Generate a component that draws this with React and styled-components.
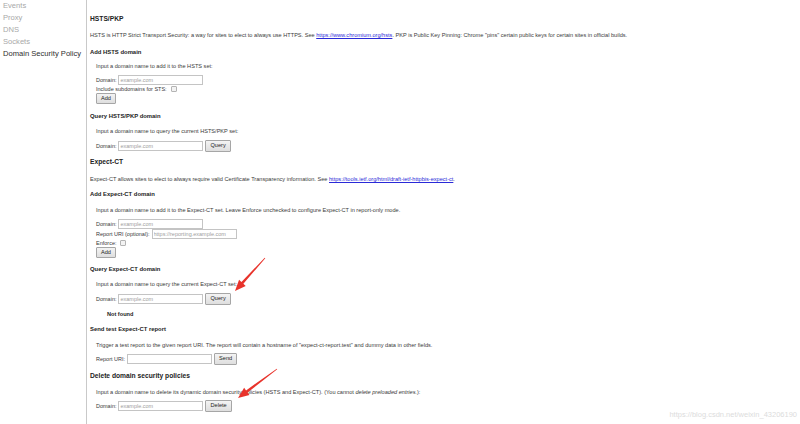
import React from "react";
import styled, { createGlobalStyle } from "styled-components";

const GlobalStyle = createGlobalStyle`
  html, body { margin: 0; padding: 0; background: #fff; }
  body { overflow: hidden; font-family: "Liberation Sans", Arial, sans-serif; }
  * { box-sizing: border-box; }
`;

const Page = styled.div`
  position: relative;
  display: flex;
  width: 800px;
  height: 424px;
  overflow: hidden;
`;

const Sidebar = styled.nav`
  width: 87px;
  flex: none;
  border-right: 1px solid #c9c9c9;
  padding: 0 0 0 3px;
  display: flex;
  flex-direction: column;
`;

const NavItem = styled.div`
  font-size: 7.6px;
  line-height: 12px;
  height: 12px;
  white-space: nowrap;
  color: ${(p) => (p.$active ? "#2e2e2e" : "#a8a8a8")};
`;

const Content = styled.main`
  flex: 1;
  padding-left: 3px;
  display: flex;
  flex-direction: column;
  color: #333;
`;

const H2 = styled.h2`
  margin: ${(p) => p.$mt ?? 6}px 0 0;
  font-size: 6.7px;
  line-height: 10px;
  height: 10px;
  font-weight: bold;
  color: #222;
  white-space: nowrap;
`;

const H3 = styled.h3`
  margin: ${(p) => p.$mt ?? 6}px 0 0;
  font-size: 5.9px;
  line-height: 10px;
  height: 10px;
  font-weight: bold;
  color: #222;
  white-space: nowrap;
`;

const Para = styled.p`
  margin: ${(p) => p.$mt ?? 6}px 0 0;
  font-size: 5.6px;
  line-height: 8px;
  height: 8px;
  white-space: nowrap;
  color: #3a3a3a;
`;

const Indent = styled.div`
  padding-left: 6px;
  display: flex;
  flex-direction: column;
  align-items: flex-start;
`;

const Link = styled.a`
  color: #2a2ad8;
  text-decoration: underline;
`;

const Row = styled.div`
  margin-top: ${(p) => p.$mt ?? 0}px;
  height: ${(p) => p.$h ?? 10}px;
  display: flex;
  align-items: center;
  gap: 1px;
  font-size: 5.5px;
  color: #3a3a3a;
  white-space: nowrap;
`;

const Label = styled.span`
  font-size: 5.5px;
  margin-right: 1px;
`;

const TextInput = styled.input`
  width: 85px;
  height: 10px;
  border: 1px solid #c4c4c4;
  padding: 0 1px;
  margin: 0;
  font-family: "Liberation Sans", Arial, sans-serif;
  font-size: 5.5px;
  color: #333;
  background: #fff;
  outline: none;
  &::placeholder { color: #a0a0a0; }
`;

const Button = styled.button`
  height: ${(p) => p.$h ?? 12}px;
  margin: 0 0 0 ${(p) => p.$ml ?? 1}px;
  padding: 0 4px;
  font-family: "Liberation Sans", Arial, sans-serif;
  font-size: 5.6px;
  line-height: 1;
  color: #222;
  border: 1px solid #a6a6a6;
  border-radius: 1px;
  background: linear-gradient(#f4f4f4, #dedede);
`;

const Check = styled.span`
  display: inline-block;
  width: 6px;
  height: 6px;
  margin-left: 2px;
  border: 1px solid #b4b4b4;
  border-radius: 1px;
  background: #f3f3f3;
`;

const NotFound = styled.div`
  margin: 5px 0 0 11px;
  font-size: 5.6px;
  line-height: 8px;
  height: 8px;
  font-weight: bold;
  color: #222;
`;

const Overlay = styled.svg`
  position: absolute;
  left: 0;
  top: 0;
  width: 800px;
  height: 424px;
  pointer-events: none;
`;

const Watermark = styled.div`
  position: absolute;
  right: 3px;
  bottom: 5px;
  font-size: 7.5px;
  color: #dcdcdc;
  white-space: nowrap;
`;

function arrowPoints(x1, y1, x2, y2) {
  const dx = x2 - x1;
  const dy = y2 - y1;
  const len = Math.hypot(dx, dy);
  const ux = dx / len;
  const uy = dy / len;
  const px = -uy;
  const py = ux;
  const head = 11;
  const bx = x2 - ux * head;
  const by = y2 - uy * head;
  const pts = [
    [x1 + px * 0.4, y1 + py * 0.4],
    [bx + px * 1.3, by + py * 1.3],
    [bx + px * 4.5, by + py * 4.5],
    [x2, y2],
    [bx - px * 4.5, by - py * 4.5],
    [bx - px * 1.3, by - py * 1.3],
    [x1 - px * 0.4, y1 - py * 0.4],
  ];
  return pts.map((p) => p.join(",")).join(" ");
}

function DomainRow({ mt, button, h = 12 }) {
  return (
    <Row $mt={mt} $h={h}>
      <Label>Domain:</Label>
      <TextInput placeholder="example.com" />
      {button && <Button>{button}</Button>}
    </Row>
  );
}

export default function App() {
  return (
    <>
      <GlobalStyle />
      <Page>
        <Sidebar>
          <NavItem>Events</NavItem>
          <NavItem>Proxy</NavItem>
          <NavItem>DNS</NavItem>
          <NavItem>Sockets</NavItem>
          <NavItem $active>Domain Security Policy</NavItem>
        </Sidebar>
        <Content>
          <H2 $mt={14}>HSTS/PKP</H2>
          <Para $mt={7}>
            HSTS is HTTP Strict Transport Security: a way for sites to elect to always use HTTPS. See{" "}
            <Link>https://www.chromium.org/hsts</Link>. PKP is Public Key Pinning: Chrome "pins" certain public
            keys for certain sites in official builds.
          </Para>

          <H3 $mt={8}>Add HSTS domain</H3>
          <Indent>
            <Para $mt={5}>Input a domain name to add it to the HSTS set:</Para>
            <DomainRow mt={5} h={10} />
            <Row $h={8}>
              <Label>Include subdomains for STS:</Label>
              <Check />
            </Row>
            <Button $ml={0} $h={11}>Add</Button>
          </Indent>

          <H3 $mt={7}>Query HSTS/PKP domain</H3>
          <Indent>
            <Para $mt={6}>Input a domain name to query the current HSTS/PKP set:</Para>
            <DomainRow mt={5} button="Query" />
          </Indent>

          <H2 $mt={5}>Expect-CT</H2>
          <Para $mt={8}>
            Expect-CT allows sites to elect to always require valid Certificate Transparency information. See{" "}
            <Link>https://tools.ietf.org/html/draft-ietf-httpbis-expect-ct</Link>.
          </Para>

          <H3 $mt={6}>Add Expect-CT domain</H3>
          <Indent>
            <Para $mt={7}>
              Input a domain name to add it to the Expect-CT set. Leave Enforce unchecked to configure Expect-CT in
              report-only mode.
            </Para>
            <DomainRow mt={5} h={10} />
            <Row $h={10}>
              <Label>Report URI (optional):</Label>
              <TextInput placeholder="https://reporting.example.com" />
            </Row>
            <Row $h={8}>
              <Label>Enforce:</Label>
              <Check />
            </Row>
            <Button $ml={0} $h={11}>Add</Button>
          </Indent>

          <H3 $mt={6}>Query Expect-CT domain</H3>
          <Indent>
            <Para $mt={6}>Input a domain name to query the current Expect-CT set:</Para>
            <DomainRow mt={5} button="Query" />
            <NotFound>Not found</NotFound>
          </Indent>

          <H3 $mt={6}>Send test Expect-CT report</H3>
          <Indent>
            <Para $mt={7}>
              Trigger a test report to the given report URI. The report will contain a hostname of
              "expect-ct-report.test" and dummy data in other fields.
            </Para>
            <Row $mt={4} $h={12}>
              <Label>Report URI:</Label>
              <TextInput />
              <Button>Send</Button>
            </Row>
          </Indent>

          <H2 $mt={6}>Delete domain security policies</H2>
          <Indent>
            <Para $mt={7}>
              Input a domain name to delete its dynamic domain security policies (HSTS and Expect-CT). (You cannot{" "}
              <i>delete preloaded entries.</i>):
            </Para>
            <DomainRow mt={4} button="Delete" />
          </Indent>
        </Content>

        <Overlay viewBox="0 0 800 424">
          <polygon points={arrowPoints(265, 258, 235, 291)} fill="#e8332b" />
          <polygon points={arrowPoints(277, 369, 238, 398)} fill="#e8332b" />
        </Overlay>
        <Watermark>https://blog.csdn.net/weixin_43206190</Watermark>
      </Page>
    </>
  );
}
